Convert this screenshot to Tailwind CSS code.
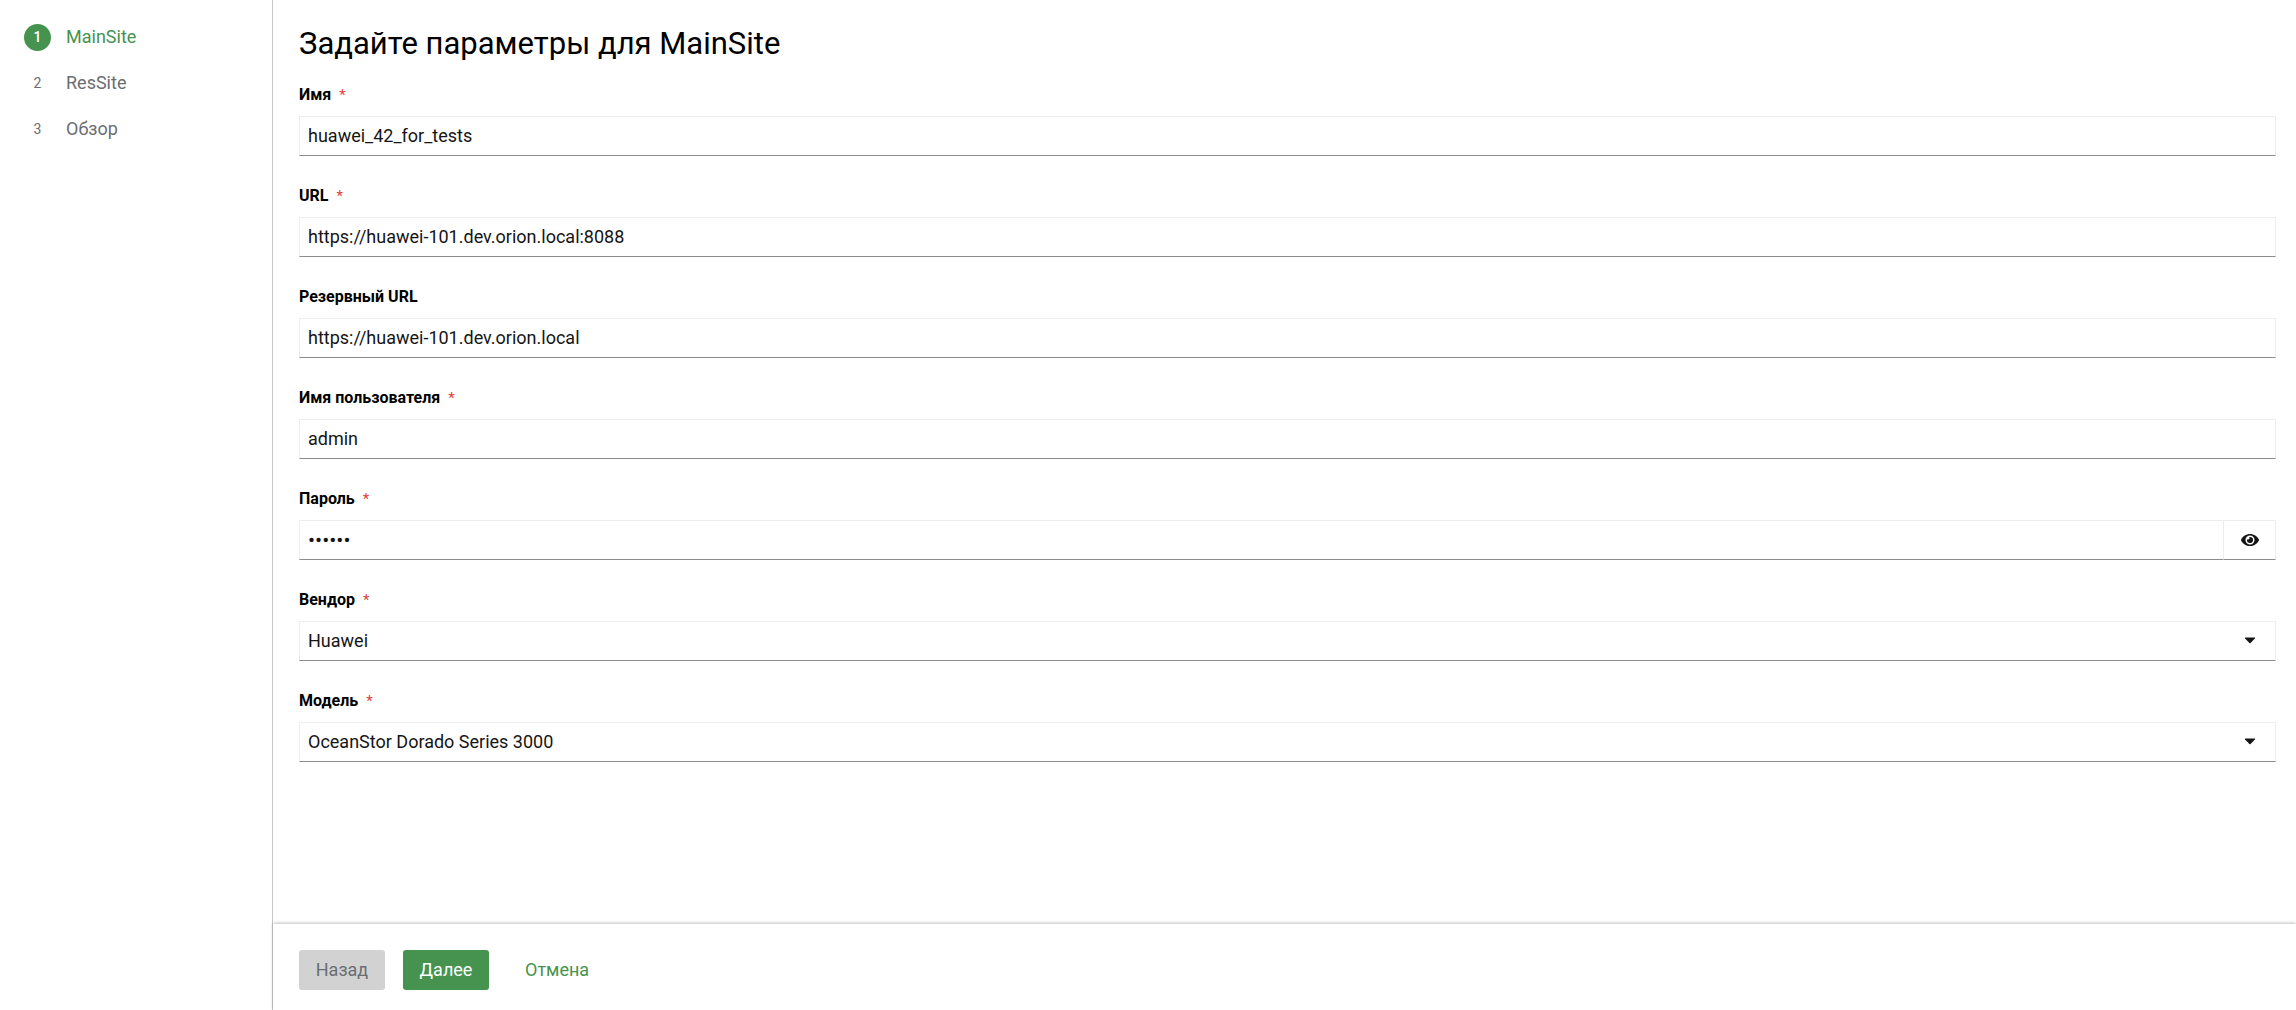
<!doctype html>
<html lang="ru">
  <head>
    <meta charset="utf-8">
    <meta name="viewport" content="width=device-width, initial-scale=1">
    <script src="https://cdn.jsdelivr.net/npm/@tailwindcss/browser@4"></script>
    <title>MainSite</title>
  </head>
  <body class="flex min-h-screen bg-white font-[Roboto,sans-serif] text-lg text-[#151515]">
    <!-- Wizard steps -->
    <nav class="w-[273px] shrink-0 border-r border-[#c8c8c8] px-6 py-[23px]">
      <ol class="space-y-[18px] leading-7 text-[#6a6e73]">
        <li>
          <a href="#" class="flex items-center gap-[15px] text-[#46934f]" aria-current="step">
            <span class="flex size-[27px] items-center justify-center rounded-full bg-[#46934f] text-sm font-medium text-white">1</span>
            MainSite
          </a>
        </li>
        <li>
          <a href="#" class="flex items-center gap-[15px]">
            <span class="flex size-[27px] items-center justify-center text-sm">2</span>
            ResSite
          </a>
        </li>
        <li>
          <a href="#" class="flex items-center gap-[15px]">
            <span class="flex size-[27px] items-center justify-center text-sm">3</span>
            Обзор
          </a>
        </li>
      </ol>
    </nav>

    <main class="flex min-w-0 flex-1 flex-col">
      <form id="site" class="flex-1 pt-6 pr-5 pb-8 pl-[26px]">
        <h1 class="mb-[19px] text-[31px] leading-10 text-black">Задайте параметры для MainSite</h1>

        <div class="space-y-7">
          <div>
            <label for="name" class="mb-[9px] block text-base leading-6 font-bold text-black">Имя <span class="ml-1 text-[15px] font-normal text-[#e0403c]">*</span></label>
            <input id="name" type="text" value="huawei_42_for_tests" class="block h-10 w-full border border-[#ededed] border-b-[#8a8d90] px-2 pb-0.5 outline-none">
          </div>

          <div>
            <label for="url" class="mb-[9px] block text-base leading-6 font-bold text-black">URL <span class="ml-1 text-[15px] font-normal text-[#e0403c]">*</span></label>
            <input id="url" type="text" value="https://huawei-101.dev.orion.local:8088" class="block h-10 w-full border border-[#ededed] border-b-[#8a8d90] px-2 pb-0.5 outline-none">
          </div>

          <div>
            <label for="backup-url" class="mb-[9px] block text-base leading-6 font-bold text-black">Резервный URL</label>
            <input id="backup-url" type="text" value="https://huawei-101.dev.orion.local" class="block h-10 w-full border border-[#ededed] border-b-[#8a8d90] px-2 pb-0.5 outline-none">
          </div>

          <div>
            <label for="user" class="mb-[9px] block text-base leading-6 font-bold text-black">Имя пользователя <span class="ml-1 text-[15px] font-normal text-[#e0403c]">*</span></label>
            <input id="user" type="text" value="admin" class="block h-10 w-full border border-[#ededed] border-b-[#8a8d90] px-2 pb-0.5 outline-none">
          </div>

          <div>
            <label for="password" class="mb-[9px] block text-base leading-6 font-bold text-black">Пароль <span class="ml-1 text-[15px] font-normal text-[#e0403c]">*</span></label>
            <div class="flex">
              <input id="password" type="password" value="secret" class="block h-10 min-w-0 flex-1 border border-r-0 border-[#ededed] border-b-[#8a8d90] px-2 text-[21px] outline-none">
              <button type="button" id="toggle" aria-label="Показать пароль" class="flex h-10 w-[53px] items-center justify-center border border-[#ededed] border-b-[#8a8d90]">
                <svg class="h-4 w-[18px] fill-current" viewBox="0 0 576 512"><path d="M572.52 241.4C518.29 135.59 410.93 64 288 64S57.68 135.64 3.48 241.41a32.35 32.35 0 0 0 0 29.19C57.71 376.41 165.07 448 288 448s230.32-71.64 284.52-177.41a32.35 32.35 0 0 0 0-29.19zM288 400a144 144 0 1 1 144-144 143.93 143.93 0 0 1-144 144zm0-240a95.31 95.31 0 0 0-25.31 3.79 47.85 47.85 0 0 1-66.9 66.9A95.78 95.78 0 1 0 288 160z"/></svg>
              </button>
            </div>
          </div>

          <div>
            <label for="vendor" class="mb-[9px] block text-base leading-6 font-bold text-black">Вендор <span class="ml-1 text-[15px] font-normal text-[#e0403c]">*</span></label>
            <div class="relative">
              <select id="vendor" class="block h-10 w-full appearance-none border border-[#ededed] border-b-[#8a8d90] px-2 outline-none">
                <option>Huawei</option>
              </select>
              <svg class="pointer-events-none absolute top-4 right-5 h-[7px] w-3 fill-current" viewBox="0 0 12 7"><path d="M1.5 .5h9q1 .1 .4 .9L6.6 6q-.6.6-1.2 0L1.1 1.4Q.5.6 1.5.5z"/></svg>
            </div>
          </div>

          <div>
            <label for="model" class="mb-[9px] block text-base leading-6 font-bold text-black">Модель <span class="ml-1 text-[15px] font-normal text-[#e0403c]">*</span></label>
            <div class="relative">
              <select id="model" class="block h-10 w-full appearance-none border border-[#ededed] border-b-[#8a8d90] px-2 outline-none">
                <option>OceanStor Dorado Series 3000</option>
              </select>
              <svg class="pointer-events-none absolute top-4 right-5 h-[7px] w-3 fill-current" viewBox="0 0 12 7"><path d="M1.5 .5h9q1 .1 .4 .9L6.6 6q-.6.6-1.2 0L1.1 1.4Q.5.6 1.5.5z"/></svg>
            </div>
          </div>
        </div>
      </form>

      <footer class="flex gap-[18px] py-5 pt-[26px] pl-[26px] shadow-[0_-1px_3px_rgba(3,3,3,0.25)]">
        <button type="button" disabled class="h-10 w-[86px] rounded-[3px] bg-[#d2d2d2] text-[#6a6e73]">Назад</button>
        <button type="submit" form="site" class="h-10 w-[86px] rounded-[3px] bg-[#46934f] text-white">Далее</button>
        <button type="button" class="h-10 px-[18px] text-[#46934f]">Отмена</button>
      </footer>
    </main>

<script>
document.getElementById("site").addEventListener("submit", function(e){
    e.preventDefault()
})
document.getElementById("toggle").addEventListener("click", function(){
    var field=document.getElementById("password")
    field.type=field.type=="password" ? "text" : "password"
})
</script>
  </body>
</html>
